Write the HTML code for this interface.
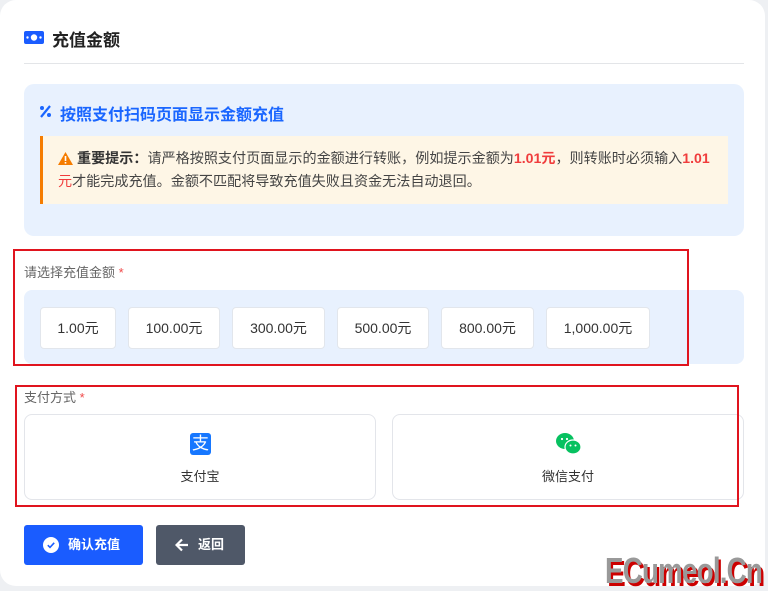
<!DOCTYPE html>
<html><head><meta charset="utf-8"><style>
*{margin:0;padding:0;box-sizing:border-box}
body{width:768px;height:589px;background:#eef0f3;font-family:"Liberation Sans","Noto Sans CJK SC",sans-serif;position:relative;overflow:hidden;color:#333}
.card{position:absolute;left:0;top:0;width:765px;height:586px;background:#fff;border-radius:16px}
.abs{position:absolute}
.title{left:52px;top:26px;font-size:17px;font-weight:bold;color:#222}
.div{left:24px;top:63px;width:720px;height:1px;background:#e3e5e8}
.panel{left:24px;top:84px;width:720px;height:152px;background:#e8f1fe;border-radius:10px}
.h2{left:60px;top:101px;font-size:16px;font-weight:bold;color:#1a66ff}
.warn{left:40px;top:136px;width:688px;height:68px;background:#fef6e6;border-left:3px solid #f57c00}
.wt{left:58px;top:147px;width:680px;font-size:14.1px;line-height:23px;color:#444;white-space:nowrap}
.red{color:#f03c3c;font-weight:bold}
.rbox{border:2px solid #e0141e}
.lbl{font-size:13px;color:#666}
.lbl b{color:#f04848;font-weight:normal}
.amt{left:24px;top:290px;width:720px;height:74px;background:#e8f1fe;border-radius:8px}
.btn{top:307px;height:42px;background:#fff;border:1px solid #e2e6ec;border-radius:4px;font-size:14px;color:#333;text-align:center;line-height:40px}
.pay{top:414px;height:86px;border:1px solid #e3e5ea;border-radius:8px;background:#fff;text-align:center;font-size:13px;color:#333}
.b1{left:24px;top:525px;width:119px;height:40px;background:#1a5cff;border-radius:3px;color:#fff;font-size:13px;font-weight:bold;line-height:40px}
.b2{left:156px;top:525px;width:89px;height:40px;background:#4f5868;border-radius:3px;color:#fff;font-size:13px;font-weight:bold;line-height:40px}
.wm{left:605px;top:553px;font-size:36px;font-weight:bold;color:#999;font-family:"Liberation Sans Narrow","Liberation Sans",sans-serif;transform:scaleX(.77);transform-origin:left top;text-shadow:3px 3px 0 #c00;letter-spacing:-1px;line-height:36px}
</style></head><body>
<div class="card"></div>
<svg class="abs" style="left:24px;top:30px" width="20" height="15" viewBox="0 0 20 15"><rect x="0" y="1" width="20" height="13" rx="2" fill="#1a5cff"/><circle cx="10" cy="7.5" r="3.2" fill="#fff"/><circle cx="3.5" cy="7.5" r="1.2" fill="#fff"/><circle cx="16.5" cy="7.5" r="1.2" fill="#fff"/></svg>
<div class="abs title">充值金额</div>
<div class="abs div"></div>
<div class="abs panel"></div>
<svg class="abs" style="left:39px;top:105px" width="13" height="13" viewBox="0 0 13 13"><circle cx="3" cy="3" r="2" fill="#1a66ff"/><circle cx="10" cy="10" r="2" fill="#1a66ff"/><path d="M11 1L2 12" stroke="#1a66ff" stroke-width="2.2"/></svg>
<div class="abs h2">按照支付扫码页面显示金额充值</div>
<div class="abs warn"></div>
<svg class="abs" style="left:58px;top:152px" width="15" height="13" viewBox="0 0 15 13"><path d="M7.5 0L15 13H0Z" fill="#f57c00"/><rect x="6.7" y="4" width="1.6" height="5" fill="#fff"/><rect x="6.7" y="10" width="1.6" height="1.6" fill="#fff"/></svg>
<div class="abs wt"><span style="margin-left:19px;font-weight:bold;color:#333">重要提示：</span>请严格按照支付页面显示的金额进行转账，例如提示金额为<span class="red">1.01元</span>，则转账时必须输入<span class="red">1.01</span><br><span class="red" style="font-weight:normal">元</span>才能完成充值。金额不匹配将导致充值失败且资金无法自动退回。</div>
<div class="abs amt"></div>
<div class="abs lbl" style="left:24px;top:262px">请选择充值金额 <b>*</b></div>
<div class="abs btn" style="left:40px;width:76px">1.00元</div>
<div class="abs btn" style="left:128px;width:92px">100.00元</div>
<div class="abs btn" style="left:232px;width:93px">300.00元</div>
<div class="abs btn" style="left:337px;width:92px">500.00元</div>
<div class="abs btn" style="left:441px;width:93px">800.00元</div>
<div class="abs btn" style="left:546px;width:104px">1,000.00元</div>
<div class="abs rbox" style="left:13px;top:249px;width:676px;height:117px"></div>
<div class="abs lbl" style="left:24px;top:387px">支付方式 <b>*</b></div>
<div class="abs pay" style="left:24px;width:352px"><div style="position:absolute;left:165px;top:18px;width:21px;height:22px;background:#1677ff;border-radius:3px;color:#fff;font-size:17px;line-height:22px;text-align:center">支</div><div style="position:absolute;width:100%;top:51px">支付宝</div></div>
<div class="abs pay" style="left:392px;width:352px"><svg style="position:absolute;left:162px;top:16px" width="28" height="26" viewBox="0 0 28 26"><ellipse cx="10" cy="10" rx="9" ry="8" fill="#07c160"/><ellipse cx="18" cy="16" rx="8" ry="7" fill="#07c160" stroke="#fff" stroke-width="1.2"/><circle cx="7" cy="8" r="1.1" fill="#fff"/><circle cx="12" cy="8" r="1.1" fill="#fff"/><circle cx="15.5" cy="14.5" r="1" fill="#fff"/><circle cx="20.5" cy="14.5" r="1" fill="#fff"/></svg><div style="position:absolute;width:100%;top:51px">微信支付</div></div>
<div class="abs rbox" style="left:15px;top:385px;width:724px;height:122px"></div>
<div class="abs b1"><svg style="position:absolute;left:19px;top:12px" width="16" height="16" viewBox="0 0 16 16"><circle cx="8" cy="8" r="8" fill="#fff"/><path d="M4.8 8.2l2.2 2.2 4.2-4.6" stroke="#1a5cff" stroke-width="1.6" fill="none"/></svg><span style="position:absolute;left:44px">确认充值</span></div>
<div class="abs b2"><svg style="position:absolute;left:19px;top:13px" width="14" height="14" viewBox="0 0 14 14"><path d="M13 7H2M7 1.5L1.5 7 7 12.5" stroke="#fff" stroke-width="2.2" fill="none"/></svg><span style="position:absolute;left:42px">返回</span></div>
<div class="abs wm">ECumeol.Cn</div>
</body></html>
